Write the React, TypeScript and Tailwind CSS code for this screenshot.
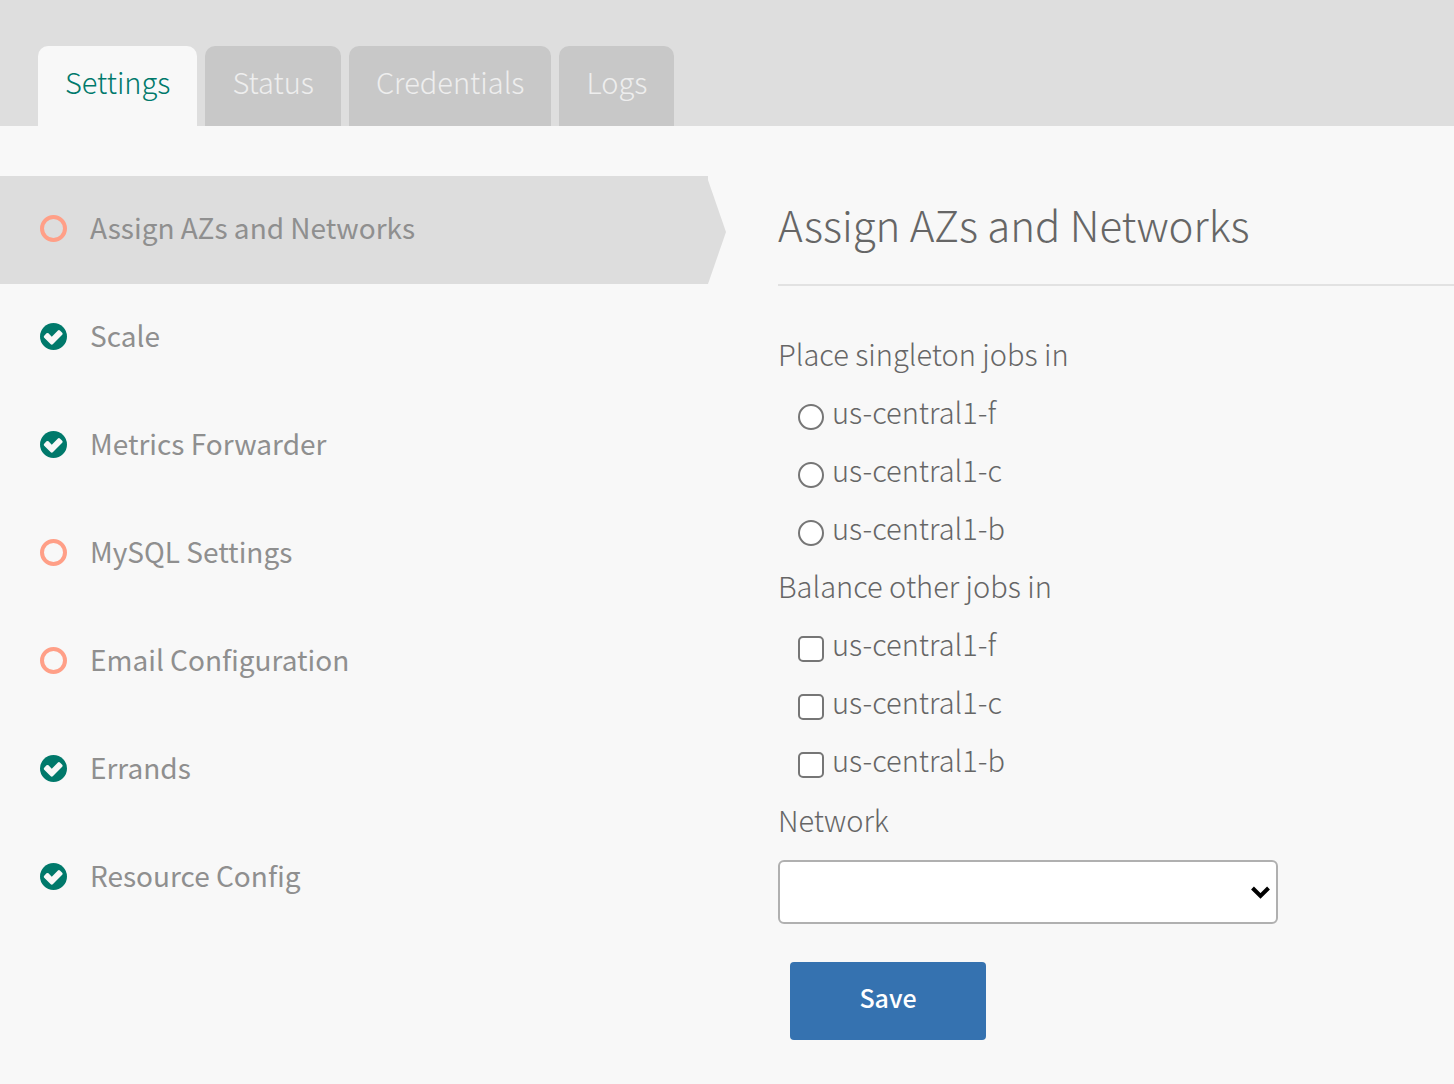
const tabs = ["Settings", "Status", "Credentials", "Logs"];

const steps = [
  { name: "Assign AZs and Networks", done: false },
  { name: "Scale", done: true },
  { name: "Metrics Forwarder", done: true },
  { name: "MySQL Settings", done: false },
  { name: "Email Configuration", done: false },
  { name: "Errands", done: true },
  { name: "Resource Config", done: true },
];

const zones = ["us-central1-f", "us-central1-c", "us-central1-b"];

function StatusIcon({ done }: { done: boolean }) {
  if (!done) {
    return <span className="size-[27px] shrink-0 rounded-full border-4 border-[#ff9f87]" />;
  }
  return (
    <svg className="size-[27px] shrink-0" viewBox="352 352 1088 1088" aria-hidden="true">
      <circle cx="896" cy="896" r="544" className="fill-[#00796b]" />
      <path
        className="fill-[#f8f8f8]"
        transform="translate(904 950) scale(0.9) translate(-918 -950)"
        d="M1299 813l-422 422q-19 19-45 19t-45-19l-294-294q-19-19-19-45t19-45l102-102q19-19 45-19t45 19l147 147 275-275q19-19 45-19t45 19l102 102q19 19 19 45t-19 45z"
      />
    </svg>
  );
}

function ZoneGroup({ legend, type, name }: { legend: string; type: "radio" | "checkbox"; name: string }) {
  return (
    <fieldset>
      <legend className="leading-[58px]">{legend}</legend>
      {zones.map((zone) => (
        <label key={zone} className="flex items-center gap-2 pl-5 leading-[58px]">
          <input
            type={type}
            name={name}
            value={zone}
            className={
              type === "radio"
                ? "mt-3 size-[26px] appearance-none rounded-full border-2 border-[#767676] bg-white checked:bg-[#3572b0]"
                : "mt-3 size-[26px] appearance-none rounded-[5px] border-2 border-[#767676] bg-white checked:bg-[#3572b0]"
            }
          />
          {zone}
        </label>
      ))}
    </fieldset>
  );
}

export default function App() {
  return (
    <div className="min-h-screen bg-[#f8f8f8] font-['Noto_Sans_CJK_SC',sans-serif] text-[29px] font-light text-[#666]">
      <header className="bg-[#dedede] pt-[46px] pl-[38px]">
        <nav className="flex gap-2">
          {tabs.map((tab, i) => (
            <a
              key={tab}
              href="#"
              className={
                i === 0
                  ? "h-20 rounded-t-[10px] bg-[#f8f8f8] px-[27px] leading-[70px] text-[#00796b]"
                  : "h-20 rounded-t-[10px] bg-[#c8c8c8] px-[27px] leading-[70px] text-[#eee]"
              }
            >
              {tab}
            </a>
          ))}
        </nav>
      </header>

      <div className="flex pt-[50px]">
        <aside className="w-1/2 pr-[19px]">
          <ul>
            {steps.map((step, i) => (
              <li key={step.name} className={i === 0 ? "relative bg-[#ddd]" : "relative"}>
                <a
                  href="#"
                  className="flex h-[108px] items-center gap-[23px] pb-[3px] pl-10 text-[28px] font-normal text-[#8f8f8f]"
                >
                  <StatusIcon done={step.done} />
                  <span className="pb-1">{step.name}</span>
                </a>
                {i === 0 && (
                  <span className="absolute top-1 bottom-0 left-full w-[18px] bg-[#ddd] [clip-path:polygon(0_0,100%_50%,0_100%)]" />
                )}
              </li>
            ))}
          </ul>
        </aside>

        <main className="w-1/2 pl-[51px]">
          <h1 className="border-b-2 border-[#e2e2e2] pb-3 text-[42px] leading-[96px]">Assign AZs and Networks</h1>
          <form className="pt-[38px]">
            <ZoneGroup legend="Place singleton jobs in" type="radio" name="singleton" />
            <ZoneGroup legend="Balance other jobs in" type="checkbox" name="balance" />
            <label htmlFor="network" className="mt-0.5 block leading-[58px]">
              Network
            </label>
            <div className="relative mt-3 max-w-[500px]">
              <select
                id="network"
                defaultValue=""
                className="block h-16 w-full appearance-none rounded-md border-2 border-[#b0b0b0] bg-white px-4"
              >
                <option value="" />
              </select>
              <svg
                className="pointer-events-none absolute top-[26px] right-2 h-[13px] w-[19px] fill-none stroke-black"
                viewBox="0 0 19 13"
                strokeWidth="4"
                aria-hidden="true"
              >
                <path d="M1.5 2L9.5 10L17.5 2" />
              </svg>
            </div>
            <button
              type="button"
              className="mt-[38px] mb-11 ml-3 block h-[78px] w-[196px] rounded bg-[#3572b0] pb-1.5 text-[25px] font-medium text-white"
            >
              Save
            </button>
          </form>
        </main>
      </div>
    </div>
  );
}
